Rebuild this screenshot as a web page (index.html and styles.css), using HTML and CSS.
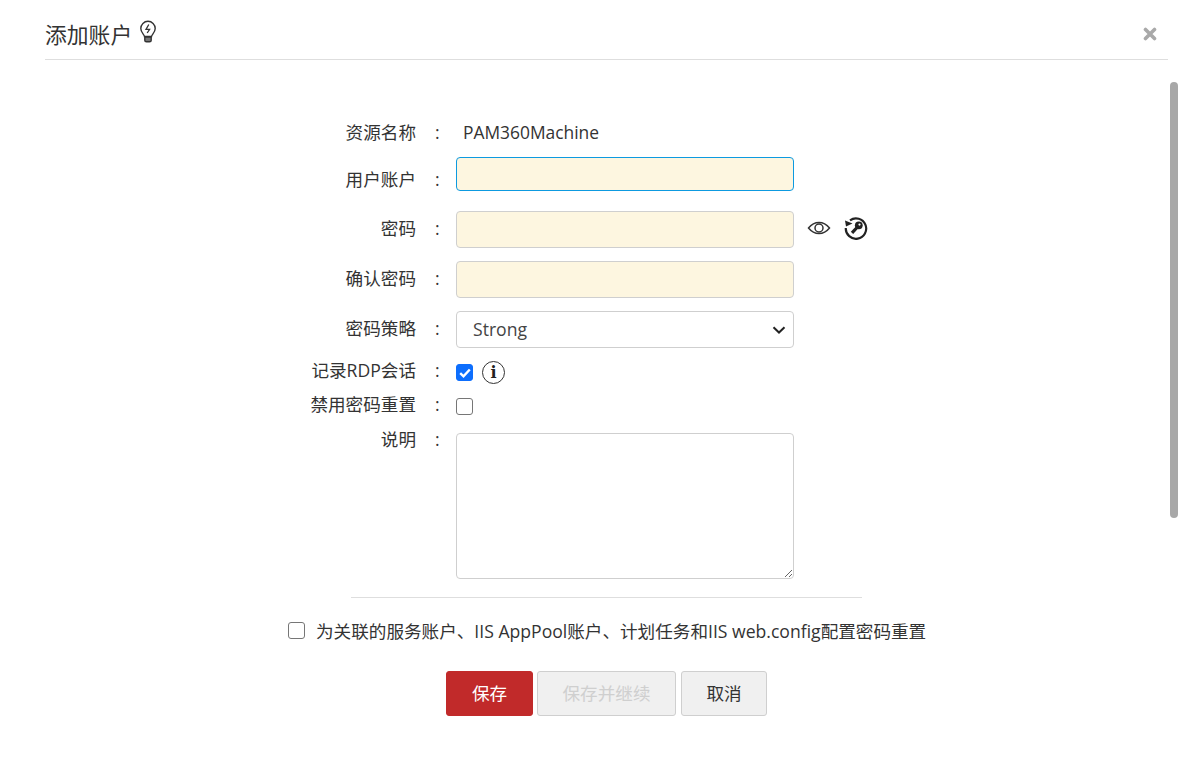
FILE: index.html
```html
<!DOCTYPE html>
<html lang="zh-CN">
<head>
<meta charset="utf-8">
<title>添加账户</title>
<link rel="stylesheet" href="styles.css">
</head>
<body>
<div class="dialog">
  <header class="head">
    <h1 class="title">添加账户</h1>
    <svg class="bulb" width="20" height="24" viewBox="0 0 20 24" fill="none" stroke="#333" stroke-width="1.4">
      <path d="M6.5 16.5c0-2-3.7-3.6-3.7-8a7.2 7.2 0 0 1 14.4 0c0 4.400-3.700 6-3.700 8z"/>
      <path d="M10.800 4.500 8 9.300h3.600L9.200 13" stroke-width="1.300"/>
      <path d="M6.800 17h6.400v3.200a1.600 1.600 0 0 1-1.600 1.600H8.400a1.600 1.600 0 0 1-1.600-1.600z" fill="#777"/>
    </svg>
    <svg class="close" width="14" height="14" viewBox="0 0 14 14" stroke="#a9a9a9" stroke-width="3.600" stroke-linecap="round">
      <path d="M2.500 2.500 11.500 11.500M11.500 2.500 2.500 11.500"/>
    </svg>
  </header>

  <form class="form">
    <div class="row row-name">
      <span class="label">资源名称</span><span class="colon">:</span>
      <span class="static">PAM360Machine</span>
    </div>
    <div class="row row-user">
      <span class="label">用户账户</span><span class="colon">:</span>
      <input class="field field-focus" type="text">
    </div>
    <div class="row row-pass">
      <span class="label">密码</span><span class="colon">:</span>
      <input class="field" type="text">
      <svg class="eye" width="24" height="16" viewBox="0 0 24 16" fill="none" stroke="#333" stroke-width="1.500">
        <path d="M1.500 8C4.500 4.300 8 2.500 12 2.500S19.500 4.300 22.500 8C19.500 11.700 16 13.500 12 13.500S4.500 11.700 1.500 8z"/>
        <circle cx="12" cy="8" r="4"/>
      </svg>
      <svg class="keyreset" width="24" height="24" viewBox="0 0 24 24" fill="none">
        <path d="M6 4.300A10.200 10.200 0 1 1 1.800 12" stroke="#222" stroke-width="2.200"/>
        <path d="M1 4.500 2 10.500 8.500 7.500z" fill="#222"/>
        <circle cx="14.800" cy="9.300" r="3.900" fill="#222"/>
        <path d="M13.500 11 8 16.800" stroke="#222" stroke-width="3.200"/>
        <circle cx="15.500" cy="8.600" r="1.100" fill="#fff"/>
      </svg>
    </div>
    <div class="row row-confirm">
      <span class="label">确认密码</span><span class="colon">:</span>
      <input class="field" type="text">
    </div>
    <div class="row row-policy">
      <span class="label">密码策略</span><span class="colon">:</span>
      <div class="select">
        <span class="select-value">Strong</span>
        <svg width="14" height="8" viewBox="0 0 14 8" fill="none" stroke="#222" stroke-width="2">
          <path d="M1.500 1.200 7 6.500l5.500-5.300"/>
        </svg>
      </div>
    </div>
    <div class="row row-rdp">
      <span class="label">记录RDP会话</span><span class="colon">:</span>
      <span class="box box-on">
        <svg width="12" height="10" viewBox="0 0 12 10" fill="none" stroke="#fff" stroke-width="2.400"><path d="M1.200 5.200 4.500 8.300 10.800 1.500"/></svg>
      </span>
      <span class="info">i</span>
    </div>
    <div class="row row-disable">
      <span class="label">禁用密码重置</span><span class="colon">:</span>
      <span class="box"></span>
    </div>
    <div class="row row-desc">
      <span class="label">说明</span><span class="colon">:</span>
      <textarea class="area"></textarea>
    </div>
  </form>

  <div class="rule"></div>

  <div class="assoc">
    <span class="box"></span>
    <span class="assoc-text">为关联的服务账户、IIS AppPool账户、计划任务和IIS web.config配置密码重置</span>
  </div>

  <div class="actions">
    <button class="btn btn-save" type="button"><span class="btn-text">保存</span></button>
    <button class="btn btn-next" type="button"><span class="btn-text">保存并继续</span></button>
    <button class="btn btn-cancel" type="button"><span class="btn-text">取消</span></button>
  </div>
</div>
<div class="thumb"></div>
</body>
</html>
```
FILE: styles.css
```css
html, body {
  margin: 0;
  height: 100%;
  overflow: hidden;
  background: #fff;
}
body {
  font-family: "Open Sans", "Noto Sans CJK SC", sans-serif;
  font-size: 17.6px;
  color: #333;
}
.dialog {
  width: 1200px;
  height: 763px;
  display: flex;
  flex-direction: column;
}
.head {
  margin: 0 32px 0 45px;
  height: 59px;
  border-bottom: 1px solid #dedede;
  display: flex;
  align-items: flex-start;
}
.title {
  margin: 20px 0 0;
  font-size: 21.8px;
  line-height: 30px;
  font-weight: 400;
  color: #333;
}
.bulb {
  margin: 20px 0 0 6px;
}
.close {
  margin: 27px 11px 0 auto;
}
.form {
  display: flex;
  flex-direction: column;
  padding-top: 59px;
}
.row {
  display: flex;
  align-items: center;
}
.label {
  width: 416px;
  text-align: right;
  white-space: nowrap;
  flex: none;
  line-height: 24px;
}
.colon {
  width: 40px;
  padding-left: 19px;
  box-sizing: border-box;
  flex: none;
  line-height: 24px;
}
.row-name { height: 26px; }
.row-name .label, .row-name .colon { margin-top: -1px; }
.static { margin-left: 7px; margin-top: -1px; font-size: 17.4px; }
.row-user { margin-top: 12px; height: 34px; }
.row-user .label, .row-user .colon { margin-top: 10px; }
.row-pass { margin-top: 20px; }
.row-pass .label, .row-pass .colon { margin-top: -3px; }
.row-confirm { margin-top: 13px; }
.row-confirm .label, .row-confirm .colon { margin-top: -3px; }
.row-policy { margin-top: 13px; }
.row-policy .label, .row-policy .colon { margin-top: -3px; }
.row-rdp { margin-top: 12px; height: 25px; }
.row-disable { margin-top: 9px; height: 25px; }
.row-desc { margin-top: 14px; align-items: flex-start; }
.row-desc .label, .row-desc .colon { margin-top: -6px; }
.row-rdp .label, .row-rdp .colon { margin-top: -5px; }
.row-disable .label, .row-disable .colon { margin-top: -5px; }
.field {
  width: 338px;
  height: 37px;
  box-sizing: border-box;
  background: #fdf6e0;
  border: 1px solid #cfcfcf;
  border-radius: 4px;
  padding: 0 16px;
  margin: 0;
  outline: none;
}
.field-focus {
  height: 34px;
  border-color: #0d9ae0;
}
.eye { margin: -3px 0 0 13px; }
.keyreset { margin: -3px 0 0 13px; }
.select {
  width: 338px;
  height: 37px;
  box-sizing: border-box;
  border: 1px solid #cfcfcf;
  border-radius: 4px;
  padding: 0 7px 0 16px;
  display: flex;
  align-items: center;
  justify-content: space-between;
  color: #444;
}
.select-value { margin-top: -2px; }
.box {
  width: 17px;
  height: 17px;
  box-sizing: border-box;
  border: 1px solid #767676;
  border-radius: 3px;
  background: #fff;
  display: inline-flex;
  align-items: center;
  justify-content: center;
  flex: none;
}
.box-on {
  background: #0d6efd;
  border-color: #0d6efd;
}
.info {
  width: 23px;
  height: 23px;
  box-sizing: border-box;
  margin-left: 9px;
  border: 1.500px solid #333;
  border-radius: 50%;
  display: inline-flex;
  align-items: center;
  justify-content: center;
  font-family: "DejaVu Serif", serif;
  font-weight: 700;
  font-size: 16px;
  line-height: 1;
  color: #222;
}
.area {
  width: 338px;
  height: 146px;
  box-sizing: border-box;
  border: 1px solid #cfcfcf;
  border-radius: 4px;
  margin: 0;
  resize: both;
  outline: none;
  background: #fff;
}
.rule {
  margin: 18px 0 0 351px;
  width: 511px;
  border-top: 1px solid #dedede;
}
.assoc {
  margin: 22px 0 0 288px;
  display: flex;
  align-items: center;
  gap: 11px;
  height: 20px;
}
.assoc-text { white-space: nowrap; }
.actions {
  margin: 31px 0 0 446px;
  display: flex;
  gap: 4px;
}
.btn {
  height: 45px;
  box-sizing: border-box;
  border: 1px solid #cfcfcf;
  border-radius: 3px;
  background: #f0f0f0;
  font: inherit;
  color: #333;
  padding: 0;
}
.btn-text {
  display: block;
  margin-top: -2px;
}
.btn-save {
  width: 87px;
  background: #c12a2a;
  border-color: #c12a2a;
  color: #fff;
}
.btn-next {
  width: 139px;
  color: #cfcfcf;
}
.btn-cancel { width: 86px; margin-left: 1px; }
.thumb {
  position: absolute;
  left: 1170px;
  top: 82px;
  width: 8px;
  height: 436px;
  border-radius: 4px;
  background: #a8a8a8;
}
```
